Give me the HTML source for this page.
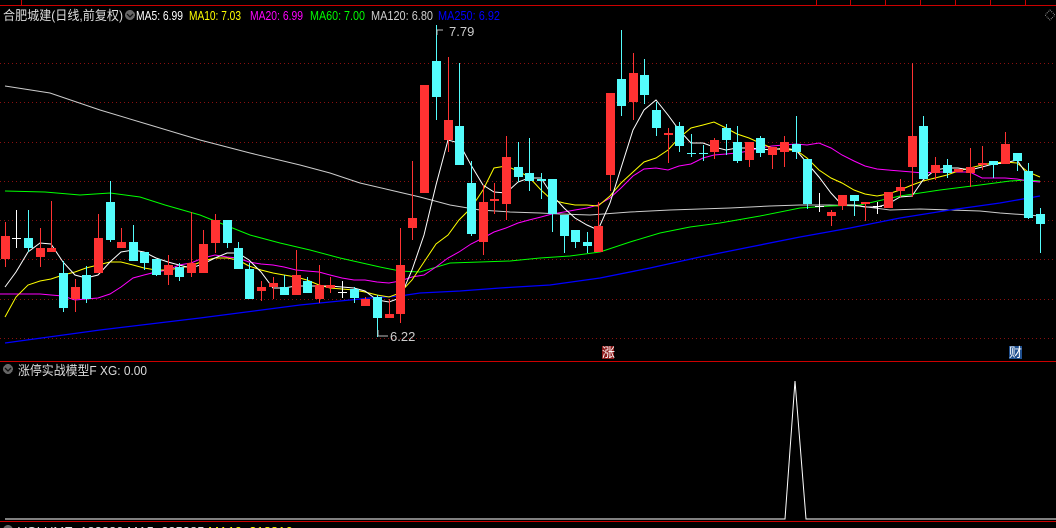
<!DOCTYPE html>
<html><head><meta charset="utf-8"><style>
html,body{margin:0;padding:0;background:#000;width:1056px;height:528px;overflow:hidden}
svg{display:block}
text{font-family:"Liberation Sans","Noto Sans CJK SC",sans-serif;font-size:13px}
</style></head><body>
<svg width="1056" height="528" viewBox="0 0 1056 528" xmlns="http://www.w3.org/2000/svg" shape-rendering="crispEdges">
<rect width="1056" height="528" fill="#000"/>
<rect x="0" y="5" width="1056" height="1" fill="#c00"/>
<g fill="#c00"><rect x="21" y="0" width="1" height="5"/><rect x="816" y="0" width="1" height="5"/><rect x="850" y="0" width="1" height="5"/><rect x="885" y="0" width="1" height="5"/><rect x="920" y="0" width="1" height="5"/><rect x="955" y="0" width="1" height="5"/><rect x="990" y="0" width="1" height="5"/><rect x="1025" y="0" width="1" height="5"/></g>
<text x="3" y="20" fill="#ddd" textLength="120" lengthAdjust="spacingAndGlyphs">合肥城建(日线,前复权)</text>
<circle cx="130" cy="15" r="5" fill="#666"/><path d="M127 14l3 3 3-3" stroke="#111" fill="none" stroke-width="1.3" shape-rendering="auto"/>
<text x="136" y="20" fill="#fff" textLength="47" lengthAdjust="spacingAndGlyphs">MA5: 6.99</text>
<text x="189" y="20" fill="#ff0" textLength="52" lengthAdjust="spacingAndGlyphs">MA10: 7.03</text>
<text x="250" y="20" fill="#f0f" textLength="53" lengthAdjust="spacingAndGlyphs">MA20: 6.99</text>
<text x="310" y="20" fill="#0f0" textLength="55" lengthAdjust="spacingAndGlyphs">MA60: 7.00</text>
<text x="371" y="20" fill="#ccc" textLength="62" lengthAdjust="spacingAndGlyphs">MA120: 6.80</text>
<text x="438" y="20" fill="#00f" textLength="62" lengthAdjust="spacingAndGlyphs">MA250: 6.92</text>
<path d="M1050 10l5 5-5 5-5-5z" fill="none" stroke="#777" stroke-dasharray="1 1"/>
<g stroke="#8a1010" stroke-dasharray="1 3">
<line x1="0" y1="63.5" x2="1056" y2="63.5"/><line x1="0" y1="102.5" x2="1056" y2="102.5"/><line x1="0" y1="142.5" x2="1056" y2="142.5"/><line x1="0" y1="181.5" x2="1056" y2="181.5"/><line x1="0" y1="220.5" x2="1056" y2="220.5"/><line x1="0" y1="259.5" x2="1056" y2="259.5"/><line x1="0" y1="299.5" x2="1056" y2="299.5"/><line x1="0" y1="338.5" x2="1056" y2="338.5"/>
</g>
<g fill="none" stroke-width="1" shape-rendering="auto">
<polyline stroke="#ccc" points="5,86 50,93 100,110 150,125 200,140 250,153 300,165 330,173 360,183 390,190 420,197 450,205 480,210 510,212 540,213 560,214 590,215 630,212 670,210 700,209 730,208 770,206 800,205 830,205 860,206 890,210 920,209 950,210 980,211 1000,213 1028,215 1040,216"/>
<polyline stroke="#00f" stroke-width="1.3" points="5,343 100,330 200,318 300,305 370,298 400,296 420,293 460,291 500,288 550,285 600,278 650,268 700,257 750,247 800,237 850,228 900,218 950,210 1000,203 1040,196"/>
<polyline stroke="#0f0" points="5,191 45,192 80,195 110,193 140,197 165,205 200,215 225,225 250,235 280,243 310,250 340,258 380,267 400,271 420,272 450,263 480,262 510,261 540,258 570,256 600,252 630,242 660,233 690,227 720,223 760,216 800,208 830,206 860,205 900,196 940,190 980,185 1010,181 1028,180 1040,181"/>
<polyline stroke="#f0f" points="0,294 40,294 51,295 63,296 75,300 86,299 98,298 110,294 121,287 133,278 144,275 156,272 168,270 179,265 191,263 203,258 215,255 227,257 238,258 249,262 261,264 273,265 284,267 296,270 307,271 319,272 330,275 342,278 354,280 365,280 377,282 389,283 400,281 412,277 424,275 436,267 448,258 459,252 471,244 483,238 494,232 506,228 518,223 529,220 541,217 552,214 564,212 575,210 587,208 598,205 610,198 621,188 633,176 644,169 656,168 668,170 679,166 691,164 703,158 714,155 726,154 737,153 749,151 760,148 772,146 784,145 796,144 807,145 819,143 831,148 842,155 854,161 865,166 877,169 888,170 900,171 912,172 923,173 935,172 947,172 958,172 970,172 982,178 993,178 1005,178 1017,179 1028,181 1040,182"/>
<polyline stroke="#ff0" points="5,317 16,297 28,285 40,281 51,279 63,275 75,272 86,268 98,265 110,262 121,262 133,265 144,268 156,270 168,270 179,268 191,266 203,261 215,258 227,258 238,260 249,266 261,270 273,273 284,275 296,277 307,280 319,285 330,288 342,289 354,290 365,292 377,295 389,297 400,293 412,280 424,262 436,244 448,235 459,220 471,208 483,190 494,168 506,166 518,171 529,177 541,190 552,200 564,203 575,205 587,205 598,206 610,196 621,183 633,172 644,162 656,158 668,150 679,138 691,128 703,125 714,122 726,128 737,134 749,138 760,143 772,148 784,150 796,150 807,158 819,170 831,178 842,183 854,190 865,194 877,196 888,194 900,190 912,185 923,181 935,178 947,175 958,171 970,168 982,165 993,163 1005,162 1017,163 1028,172 1040,177"/>
<polyline stroke="#fff" points="5,287 16,272 28,252 40,243 51,244 63,262 75,275 86,278 98,275 110,262 121,252 133,250 144,252 156,258 168,262 179,265 191,268 203,264 215,258 227,253 238,253 249,260 261,272 273,288 284,288 296,286 307,286 319,286 330,286 342,287 354,288 365,291 377,300 389,302 400,298 412,270 424,235 436,185 448,140 459,143 471,165 483,185 494,192 506,193 518,182 529,178 541,178 552,195 564,208 575,218 587,225 598,230 610,203 621,168 633,130 644,110 656,100 668,115 679,130 691,143 703,143 714,147 726,150 737,148 749,148 760,149 772,150 784,148 796,150 807,163 819,177 831,193 842,205 854,205 865,207 877,207 888,204 900,197 912,196 923,180 935,170 947,168 958,168 970,170 982,167 993,164 1005,163 1017,160 1028,176"/>
</g>
<g fill="#ff3232">
<rect x="1" y="236" width="9" height="23"/><rect x="5" y="222" width="1" height="45"/>
<rect x="36" y="248" width="9" height="9"/><rect x="40" y="228" width="1" height="39"/>
<rect x="47" y="248" width="9" height="4"/><rect x="51" y="201" width="1" height="51"/>
<rect x="71" y="287" width="9" height="12"/><rect x="75" y="279" width="1" height="33"/>
<rect x="94" y="238" width="9" height="35"/><rect x="98" y="214" width="1" height="59"/>
<rect x="117" y="242" width="9" height="6"/><rect x="121" y="228" width="1" height="20"/>
<rect x="164" y="265" width="9" height="10"/><rect x="168" y="255" width="1" height="30"/>
<rect x="187" y="263" width="9" height="10"/><rect x="191" y="212" width="1" height="65"/>
<rect x="199" y="244" width="9" height="29"/><rect x="203" y="230" width="1" height="43"/>
<rect x="211" y="220" width="9" height="23"/><rect x="215" y="214" width="1" height="39"/>
<rect x="257" y="287" width="9" height="4"/><rect x="261" y="281" width="1" height="20"/>
<rect x="269" y="283" width="9" height="4"/><rect x="273" y="277" width="1" height="22"/>
<rect x="292" y="275" width="9" height="20"/><rect x="296" y="250" width="1" height="45"/>
<rect x="315" y="285" width="9" height="14"/><rect x="319" y="265" width="1" height="38"/>
<rect x="326" y="285" width="9" height="3"/><rect x="330" y="277" width="1" height="16"/>
<rect x="361" y="299" width="9" height="7"/><rect x="365" y="297" width="1" height="9"/>
<rect x="385" y="314" width="9" height="4"/><rect x="389" y="299" width="1" height="19"/>
<rect x="396" y="265" width="9" height="49"/><rect x="400" y="228" width="1" height="95"/>
<rect x="408" y="218" width="9" height="10"/><rect x="412" y="161" width="1" height="79"/>
<rect x="420" y="85" width="9" height="108"/>
<rect x="444" y="120" width="9" height="20"/><rect x="448" y="57" width="1" height="95"/>
<rect x="479" y="202" width="9" height="40"/><rect x="483" y="185" width="1" height="70"/>
<rect x="490" y="199" width="9" height="2"/><rect x="494" y="183" width="1" height="31"/>
<rect x="502" y="157" width="9" height="47"/><rect x="506" y="136" width="1" height="84"/>
<rect x="594" y="226" width="9" height="26"/><rect x="598" y="202" width="1" height="50"/>
<rect x="606" y="93" width="9" height="82"/><rect x="610" y="93" width="1" height="98"/>
<rect x="629" y="73" width="9" height="29"/><rect x="633" y="53" width="1" height="67"/>
<rect x="664" y="133" width="9" height="2"/><rect x="668" y="128" width="1" height="35"/>
<rect x="710" y="140" width="9" height="12"/><rect x="714" y="138" width="1" height="21"/>
<rect x="745" y="142" width="9" height="18"/><rect x="749" y="142" width="1" height="25"/>
<rect x="768" y="147" width="9" height="8"/><rect x="772" y="147" width="1" height="22"/>
<rect x="780" y="142" width="9" height="10"/><rect x="784" y="136" width="1" height="31"/>
<rect x="827" y="212" width="9" height="4"/><rect x="831" y="210" width="1" height="16"/>
<rect x="838" y="195" width="9" height="11"/><rect x="842" y="195" width="1" height="15"/>
<rect x="861" y="202" width="9" height="2"/><rect x="865" y="202" width="1" height="19"/>
<rect x="884" y="192" width="9" height="16"/>
<rect x="896" y="187" width="9" height="4"/><rect x="900" y="179" width="1" height="18"/>
<rect x="908" y="136" width="9" height="31"/><rect x="912" y="63" width="1" height="134"/>
<rect x="931" y="165" width="9" height="8"/><rect x="935" y="157" width="1" height="23"/>
<rect x="954" y="169" width="9" height="3"/>
<rect x="966" y="167" width="9" height="6"/><rect x="970" y="148" width="1" height="39"/>
<rect x="978" y="163" width="9" height="2"/><rect x="982" y="146" width="1" height="24"/>
<rect x="1001" y="144" width="9" height="20"/><rect x="1005" y="132" width="1" height="32"/>
</g>
<g fill="#54fcfc">
<rect x="24" y="238" width="9" height="10"/><rect x="28" y="210" width="1" height="42"/>
<rect x="59" y="273" width="9" height="35"/><rect x="63" y="261" width="1" height="51"/>
<rect x="82" y="275" width="9" height="24"/><rect x="86" y="266" width="1" height="37"/>
<rect x="106" y="202" width="9" height="38"/><rect x="110" y="181" width="1" height="61"/>
<rect x="129" y="242" width="9" height="19"/><rect x="133" y="225" width="1" height="36"/>
<rect x="140" y="252" width="9" height="11"/><rect x="144" y="252" width="1" height="18"/>
<rect x="152" y="259" width="9" height="16"/><rect x="156" y="259" width="1" height="17"/>
<rect x="175" y="267" width="9" height="10"/><rect x="179" y="263" width="1" height="18"/>
<rect x="223" y="220" width="9" height="23"/><rect x="227" y="220" width="1" height="28"/>
<rect x="234" y="248" width="9" height="21"/><rect x="238" y="242" width="1" height="27"/>
<rect x="245" y="269" width="9" height="30"/><rect x="249" y="263" width="1" height="36"/>
<rect x="280" y="287" width="9" height="8"/><rect x="284" y="275" width="1" height="20"/>
<rect x="303" y="281" width="9" height="12"/><rect x="307" y="277" width="1" height="16"/>
<rect x="350" y="289" width="9" height="9"/><rect x="354" y="287" width="1" height="16"/>
<rect x="373" y="297" width="9" height="21"/><rect x="377" y="295" width="1" height="42"/>
<rect x="432" y="61" width="9" height="36"/><rect x="436" y="25" width="1" height="95"/>
<rect x="455" y="126" width="9" height="39"/><rect x="459" y="63" width="1" height="102"/>
<rect x="467" y="183" width="9" height="51"/><rect x="471" y="161" width="1" height="75"/>
<rect x="514" y="167" width="9" height="10"/><rect x="518" y="142" width="1" height="40"/>
<rect x="525" y="173" width="9" height="8"/><rect x="529" y="138" width="1" height="53"/>
<rect x="537" y="179" width="9" height="2"/><rect x="541" y="173" width="1" height="26"/>
<rect x="548" y="179" width="9" height="35"/><rect x="552" y="179" width="1" height="53"/>
<rect x="560" y="215" width="9" height="21"/><rect x="564" y="215" width="1" height="38"/>
<rect x="571" y="230" width="9" height="12"/><rect x="575" y="230" width="1" height="18"/>
<rect x="583" y="242" width="9" height="4"/><rect x="587" y="232" width="1" height="21"/>
<rect x="617" y="79" width="9" height="27"/><rect x="621" y="30" width="1" height="86"/>
<rect x="640" y="75" width="9" height="20"/><rect x="644" y="59" width="1" height="45"/>
<rect x="652" y="110" width="9" height="18"/><rect x="656" y="102" width="1" height="34"/>
<rect x="675" y="126" width="9" height="20"/><rect x="679" y="122" width="1" height="30"/>
<rect x="687" y="153" width="9" height="1"/><rect x="691" y="134" width="1" height="23"/>
<rect x="699" y="153" width="9" height="1"/><rect x="703" y="145" width="1" height="16"/>
<rect x="722" y="128" width="9" height="12"/><rect x="726" y="124" width="1" height="31"/>
<rect x="733" y="142" width="9" height="19"/><rect x="737" y="126" width="1" height="37"/>
<rect x="756" y="138" width="9" height="15"/><rect x="760" y="136" width="1" height="21"/>
<rect x="792" y="144" width="9" height="8"/><rect x="796" y="116" width="1" height="43"/>
<rect x="803" y="159" width="9" height="45"/><rect x="807" y="159" width="1" height="50"/>
<rect x="850" y="195" width="9" height="6"/><rect x="854" y="195" width="1" height="21"/>
<rect x="919" y="126" width="9" height="53"/><rect x="923" y="116" width="1" height="63"/>
<rect x="943" y="165" width="9" height="8"/><rect x="947" y="159" width="1" height="19"/>
<rect x="989" y="161" width="9" height="4"/><rect x="993" y="161" width="1" height="17"/>
<rect x="1013" y="153" width="9" height="8"/><rect x="1017" y="153" width="1" height="18"/>
<rect x="1024" y="171" width="9" height="47"/><rect x="1028" y="163" width="1" height="56"/>
<rect x="1036" y="214" width="9" height="10"/><rect x="1040" y="208" width="1" height="45"/>
</g>
<g fill="#fff">
<rect x="12" y="238" width="9" height="1"/><rect x="16" y="210" width="1" height="38"/>
<rect x="338" y="292" width="9" height="1"/><rect x="342" y="281" width="1" height="17"/>
<rect x="815" y="206" width="9" height="1"/><rect x="819" y="193" width="1" height="19"/>
<rect x="873" y="206" width="9" height="1"/><rect x="877" y="202" width="1" height="12"/>
</g>
<path d="M437 35V30h6" stroke="#bbb" fill="none"/>
<text x="449" y="36" fill="#ccc">7.79</text>
<path d="M378 330v6h10" stroke="#bbb" fill="none"/>
<text x="390" y="341" fill="#ccc">6.22</text>
<rect x="602" y="346" width="12" height="13" fill="#8b1a1a"/>
<text x="602" y="357" fill="#fff" font-size="11">涨</text>
<rect x="1009" y="346" width="13" height="13" fill="#1f4f8f"/>
<text x="1009" y="357" fill="#fff" font-size="11">财</text>
<rect x="0" y="361" width="1056" height="1" fill="#c00"/>
<circle cx="8" cy="369" r="5" fill="#666"/><path d="M5 368l3 3 3-3" stroke="#111" fill="none" stroke-width="1.3" shape-rendering="auto"/>
<text x="18" y="375" fill="#ddd" textLength="129" lengthAdjust="spacingAndGlyphs">涨停实战模型F  XG: 0.00</text>
<polyline points="5,519 785,519 795,381 806,519 1056,519" stroke="#fff" fill="none" shape-rendering="auto"/>
<rect x="0" y="521" width="1056" height="1" fill="#c00"/>
<circle cx="8" cy="530" r="5" fill="#666"/>
<text x="18" y="536" fill="#ddd">VOLUME: 182880 MA5: 235385 <tspan fill="#ff0">MA10: 318816</tspan></text>
</svg>
</body></html>
